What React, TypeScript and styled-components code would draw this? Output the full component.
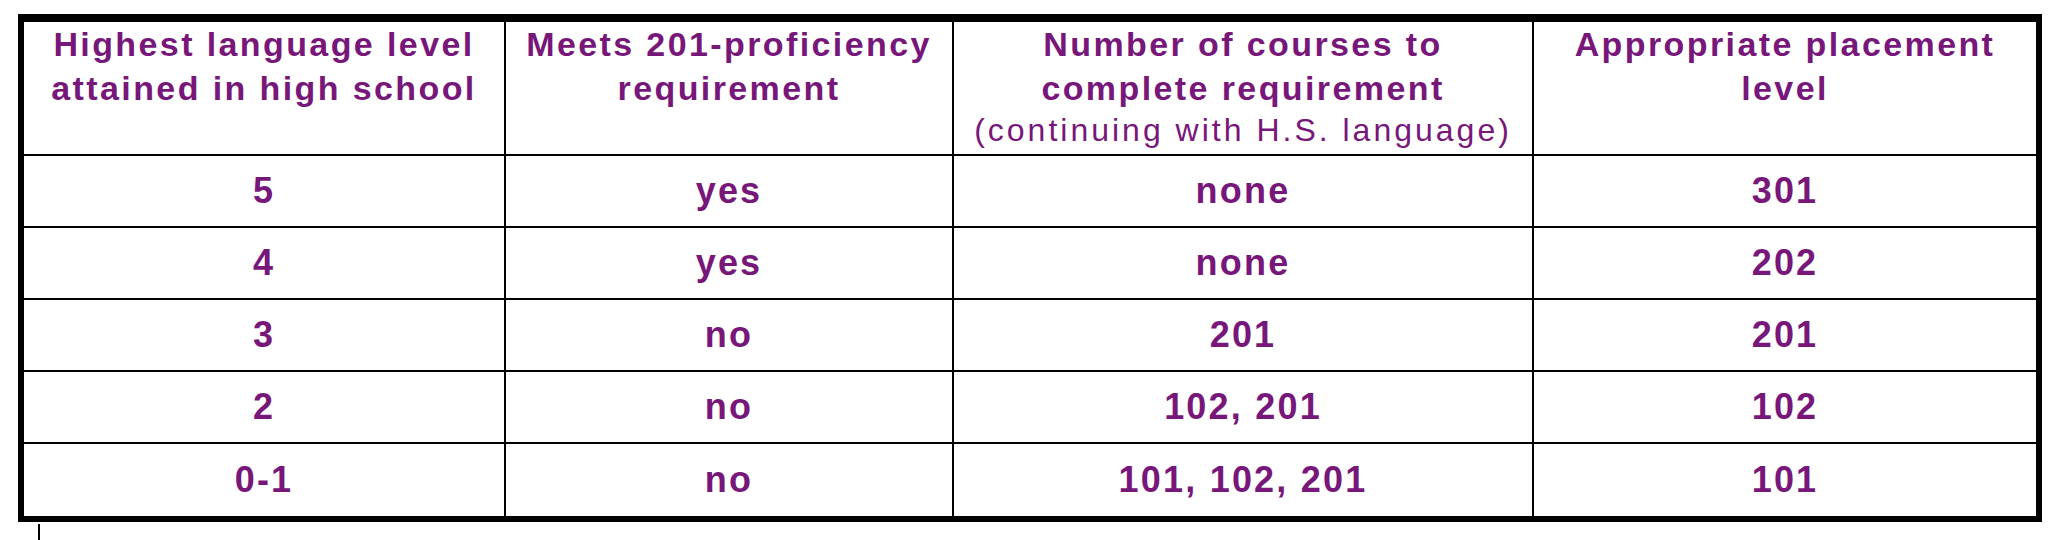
import styled, { createGlobalStyle } from 'styled-components'

const PURPLE = '#78177a'

type Row = {
    level: string
    meets: string
    courses: string
    placement: string
}

const ROWS: Row[] = [
    { level: '5', meets: 'yes', courses: 'none', placement: '301' },
    { level: '4', meets: 'yes', courses: 'none', placement: '202' },
    { level: '3', meets: 'no', courses: '201', placement: '201' },
    { level: '2', meets: 'no', courses: '102, 201', placement: '102' },
    { level: '0-1', meets: 'no', courses: '101, 102, 201', placement: '101' },
]

const GlobalStyle = createGlobalStyle`
    html, body {
        margin: 0;
        background: #ffffff;
    }

    body {
        font-family: "Liberation Sans", Arial, Helvetica, sans-serif;
    }
`

const Page = styled.div`
    padding: 14px 0 0 18px;
`

const PlacementTable = styled.div`
    display: grid;
    grid-template-columns: 480px 446px 578px 502px;
    grid-template-rows: 132px 70px 70px 70px 70px 72px;
    gap: 2px;
    width: fit-content;
    background: #000000;
    border: 6px solid #000000;
    border-top-width: 8px;
`

const HeaderCell = styled.div`
    background: #ffffff;
    color: ${PURPLE};
    text-align: center;
    font-size: 34px;
    font-weight: 700;
    line-height: 44px;
    letter-spacing: 2.4px;
`

// the smaller, regular-weight third line under the bold heading
const HeaderNote = styled.span`
    display: block;
    font-size: 32px;
    font-weight: 400;
    line-height: 40px;
    letter-spacing: 3px;
`

const Cell = styled.div`
    display: flex;
    align-items: center;
    justify-content: center;
    background: #ffffff;
    color: ${PURPLE};
    font-size: 36px;
    font-weight: 700;
    letter-spacing: 2.2px;
`

const Caret = styled.div`
    width: 2px;
    height: 18px;
    margin: 2px 0 0 20px;
    background: #000000;
`

const App = () => {
    return (
        <Page>
            <GlobalStyle />
            <PlacementTable>
                <HeaderCell>
                    Highest language level
                    <br />
                    attained in high school
                </HeaderCell>
                <HeaderCell>
                    Meets 201-proficiency
                    <br />
                    requirement
                </HeaderCell>
                <HeaderCell>
                    Number of courses to
                    <br />
                    complete requirement
                    <HeaderNote>(continuing with H.S. language)</HeaderNote>
                </HeaderCell>
                <HeaderCell>
                    Appropriate placement
                    <br />
                    level
                </HeaderCell>

                {ROWS.map((row) => [
                    <Cell key={`${row.level}-level`}>{row.level}</Cell>,
                    <Cell key={`${row.level}-meets`}>{row.meets}</Cell>,
                    <Cell key={`${row.level}-courses`}>{row.courses}</Cell>,
                    <Cell key={`${row.level}-placement`}>{row.placement}</Cell>,
                ])}
            </PlacementTable>
            <Caret />
        </Page>
    )
}

export default App
